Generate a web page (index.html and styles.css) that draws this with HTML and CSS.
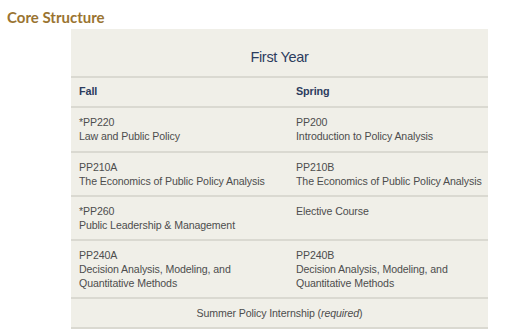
FILE: index.html
```
<!DOCTYPE html>
<html>
<head>
<meta charset="utf-8">
<link rel="stylesheet" href="styles.css">
</head>
<body>
<div class="page">
  <h2 class="title">Core Structure</h2>
  <table class="plan">
    <colgroup><col class="c1"><col class="c2"></colgroup>
    <tr class="year-row"><th colspan="2" class="year">First Year</th></tr>
    <tr class="term-row"><th class="term">Fall</th><th class="term">Spring</th></tr>
    <tr class="course-row r1">
      <td>*PP220<br>Law and Public Policy</td>
      <td>PP200<br>Introduction to Policy Analysis</td>
    </tr>
    <tr class="course-row">
      <td>PP210A<br>The Economics of Public Policy Analysis</td>
      <td>PP210B<br>The Economics of Public Policy Analysis</td>
    </tr>
    <tr class="course-row">
      <td>*PP260<br>Public Leadership &amp; Management</td>
      <td>Elective Course</td>
    </tr>
    <tr class="course-row">
      <td>PP240A<br>Decision Analysis, Modeling, and<br>Quantitative Methods</td>
      <td>PP240B<br>Decision Analysis, Modeling, and<br>Quantitative Methods</td>
    </tr>
    <tr class="summer-row"><td colspan="2" class="summer">Summer Policy Internship (<em>required</em>)</td></tr>
  </table>
</div>
</body>
</html>
```
FILE: styles.css
```
html, body {
  margin: 0;
  padding: 0;
  background: #ffffff;
}
.page {
  padding: 8px 0 0 7px;
}
.title {
  margin: 0;
  font-family: Lato, "Open Sans", "Liberation Sans", sans-serif;
  font-weight: 700;
  font-size: 15px;
  line-height: 18px;
  color: #9a7431;
  letter-spacing: 0;
}
.plan {
  margin: 3px 0 0 64px;
  width: 417px;
  table-layout: fixed;
  border-collapse: separate;
  border-spacing: 0;
  background: #f0efe8;
  font-family: "Liberation Sans", Arial, sans-serif;
  font-size: 10.6px;
  letter-spacing: -0.1px;
  line-height: 14px;
  color: #4d4d4d;
}
.c1 {
  width: 217px;
}
.c2 {
  width: 200px;
}
.plan th, .plan td {
  text-align: left;
  vertical-align: top;
  padding: 7px 8px 7px 8px;
  border-bottom: 2px solid #dad9d1;
  white-space: nowrap;
}
.plan .year {
  text-align: center;
  font-weight: 400;
  font-size: 14.5px;
  letter-spacing: -0.3px;
  line-height: 16px;
  color: #2c3c5e;
  padding: 20px 8px 11px 8px;
}
.plan .term {
  font-weight: 700;
  font-size: 10.8px;
  color: #2c3c5e;
  padding: 6px 8px 8px 8px;
}
.plan .r1 td {
  padding-bottom: 8px;
}
.plan .summer {
  text-align: center;
  padding: 7px 8px 7px 8px;
}
.summer em {
  font-style: italic;
}
```
